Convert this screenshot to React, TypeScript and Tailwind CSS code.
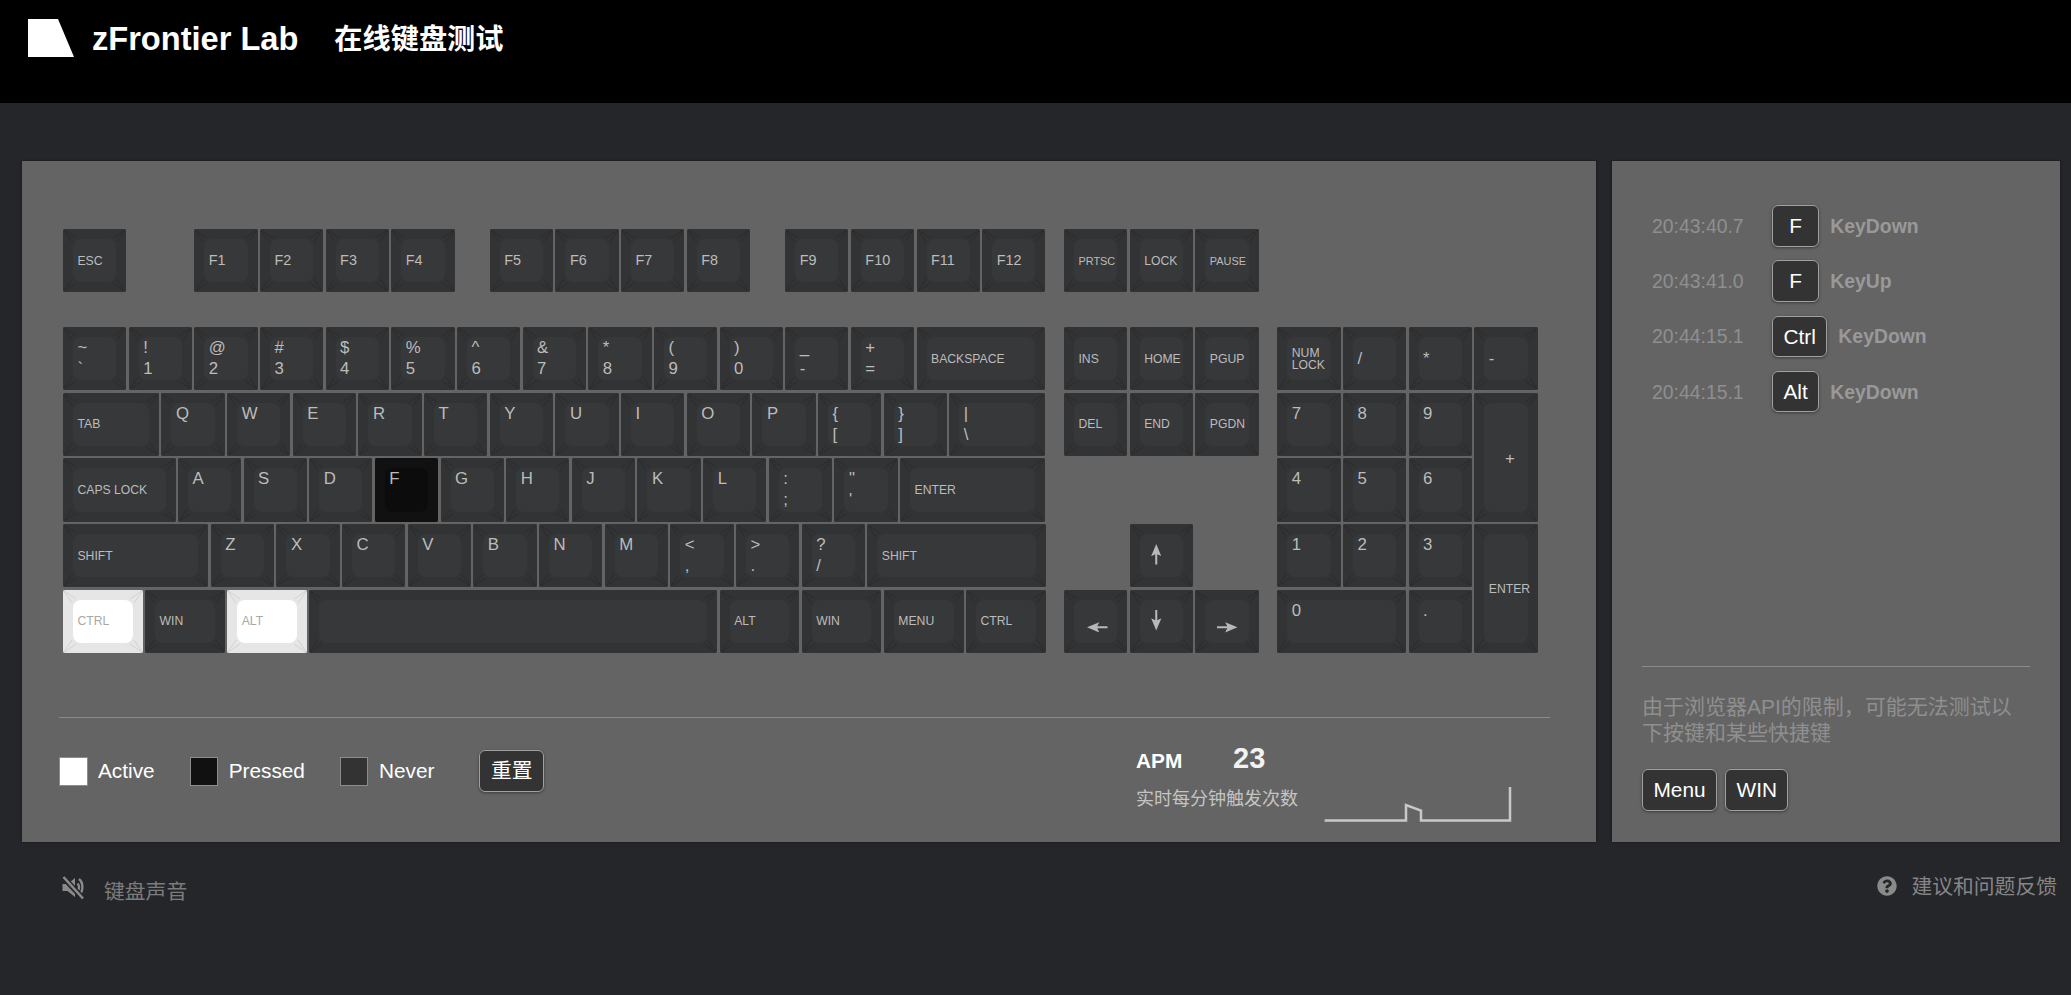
import React from 'react';
import { FaQuestionCircle } from 'react-icons/fa';

type KeyState = 'active' | 'pressed' | undefined;

interface KeyDef {
  top?: string;
  bottom?: string;
  small?: string;
  mid?: string;
  w?: string;
  state?: KeyState;
  tiny?: boolean;
  arrow?: 'up' | 'down' | 'left' | 'right';
}

const U1 = 'w-[65.67px]';
const U125 = 'w-[82.08px]';
const U15 = 'w-[98.5px]';
const U175 = 'w-[114.92px]';
const U2 = 'w-[131.33px]';
const U225 = 'w-[147.76px]';
const U275 = 'w-[180.6px]';
const U625 = 'w-[410.44px]';

const letters = (s: string): KeyDef[] => s.split('').map(c => ({ top: c }));
const pairs = (s: string): KeyDef[] => s.split(' ').map(p => ({ top: p[0], bottom: p[1] }));
const fkeys = (a: number, b: number): KeyDef[] => {
  const out: KeyDef[] = [];
  for (let i = a; i <= b; i++) out.push({ mid: `F${i}` });
  return out;
};

const row1: KeyDef[] = [...pairs('~` !1 @2 #3 $4 %5 ^6 &7 *8 (9 )0 _- +='), { small: 'BACKSPACE', w: U2 }];
const row2: KeyDef[] = [{ small: 'TAB', w: U15 }, ...letters('QWERTYUIOP'), ...pairs('{[ }]'), { top: '|', bottom: '\\', w: U15 }];
const row3: KeyDef[] = [
  { small: 'CAPS LOCK', w: U175 },
  ...letters('ASD'),
  { top: 'F', state: 'pressed' },
  ...letters('GHJKL'),
  ...pairs(':; "\''),
  { small: 'ENTER', w: U225 },
];
const row4: KeyDef[] = [{ small: 'SHIFT', w: U225 }, ...letters('ZXCVBNM'), ...pairs('<, >. ?/'), { small: 'SHIFT', w: U275 }];
const row5: KeyDef[] = [
  { small: 'CTRL', w: U125, state: 'active' },
  { small: 'WIN', w: U125 },
  { small: 'ALT', w: U125, state: 'active' },
  { w: U625 },
  { small: 'ALT', w: U125 },
  { small: 'WIN', w: U125 },
  { small: 'MENU', w: U125 },
  { small: 'CTRL', w: U125 },
];

const log = [
  { time: '20:43:40.7', key: 'F', action: 'KeyDown' },
  { time: '20:43:41.0', key: 'F', action: 'KeyUp' },
  { time: '20:44:15.1', key: 'Ctrl', action: 'KeyDown' },
  { time: '20:44:15.1', key: 'Alt', action: 'KeyDown' },
];

const Corner = ({ className }: { className: string }) => (
  <svg className={`absolute w-[14px] h-[14px] ${className}`} viewBox="0 0 14 14" fill="none" stroke="currentColor" strokeWidth="1">
    <path d="M0.5 0.5L9 13M0.5 0.5L13 9" />
  </svg>
);

const ArrowGlyph = ({ dir }: { dir: 'up' | 'down' | 'left' | 'right' }) => {
  const rot = dir === 'up' ? 'ml-[21px] -mt-[1px]' : dir === 'down' ? 'ml-[21px] -mt-[1px] rotate-180' : dir === 'left' ? 'ml-[28px] rotate-[-90deg]' : 'ml-[27px] rotate-90';
  return (
    <svg className={`w-[10.5px] h-[20.5px] ${rot}`} viewBox="0 0 10 20" fill="#b8b8b8">
      <path d="M5 0L10 12L6 10V20H4V10L0 12Z" />
    </svg>
  );
};

const Key: React.FC<KeyDef & { className?: string }> = ({ top, bottom, small, mid, w = U1, state, tiny, arrow, className }) => {
  const outer = state === 'active' ? 'bg-[#e6e6e6]' : state === 'pressed' ? 'bg-[#111111]' : 'bg-[#323335]';
  const inner = state === 'active' ? 'bg-white' : state === 'pressed' ? 'bg-[#0c0c0c]' : 'bg-[#37383a]';
  const line = state === 'active' ? 'text-[#d2d2d2]' : state === 'pressed' ? 'text-[#111111]' : 'text-[#2b2c2e]';
  const textColor = state === 'active' ? 'text-[#a8a8a8]' : 'text-[#bcbcbc]';

  return (
    <div className={`${className ?? `${w} h-[65.67px]`} p-[1.2px] shrink-0`}>
      <div className={`relative h-full w-full rounded-[2px] overflow-hidden ${outer}`}>
        <div className={`absolute inset-[10px] rounded-[8px] ${inner}`} />
        <Corner className={`left-0 top-0 ${line}`} />
        <Corner className={`right-0 top-0 -scale-x-100 ${line}`} />
        <Corner className={`left-0 bottom-0 -scale-y-100 ${line}`} />
        <Corner className={`right-0 bottom-0 -scale-100 ${line}`} />
        {small && (
          <div className={`relative h-full flex items-center pl-[14.5px] whitespace-pre-line ${tiny ? 'text-[10.9px]' : 'text-[12.2px]'} leading-[12px] ${textColor}`}>
            {small}
          </div>
        )}
        {mid && (
          <div className={`relative h-full flex items-center pl-[14.5px] ${mid.startsWith('F') ? 'text-[14.4px]' : 'text-[16.8px]'} ${textColor}`}>
            {mid}
          </div>
        )}
        {top && (
          <div className={`relative pt-[10px] pl-[14.5px] text-[16.8px] leading-[21px] ${textColor}`}>
            <div>{top}</div>
            {bottom && <div>{bottom}</div>}
          </div>
        )}
        {arrow && (
          <div className={`relative ${arrow === 'up' || arrow === 'down' ? 'pt-[21px]' : 'pt-[27px]'}`}>
            <ArrowGlyph dir={arrow} />
          </div>
        )}
      </div>
    </div>
  );
};

const KeyRow = ({ keys }: { keys: KeyDef[] }) => (
  <div className="flex">
    {keys.map((k, i) => (
      <Key key={i} {...k} />
    ))}
  </div>
);

const Chip = ({ children }: { children: React.ReactNode }) => (
  <span className="inline-flex items-center justify-center whitespace-nowrap h-[41.6px] min-w-[47.3px] px-[10.5px] rounded-[6px] border border-[#a0a0a0] bg-[#333333] text-white text-[20.8px] shadow-[0_1px_3px_rgba(0,0,0,0.4)]">
    {children}
  </span>
);

const MuteIcon = () => (
  <svg className="w-[24px] h-[24px]" viewBox="0 0 24 24" fill="none">
    <path d="M0.5 8H5.5L13 2V21L5.5 15H0.5Z" fill="#8a8a8a" />
    <path d="M15.5 7.5C17.5 9.5 17.5 13 15.5 15M17 3C21.5 6.5 21.5 15.5 17 19" stroke="#8a8a8a" strokeWidth="2.4" />
    <path d="M0.5 0.5L21.5 23" stroke="#25262a" strokeWidth="5.5" />
    <path d="M1.5 1L21 22.5" stroke="#8a8a8a" strokeWidth="2.6" />
  </svg>
);

export default function App() {
  return (
    <div className="min-h-screen bg-[#25262a] font-['Liberation_Sans','Noto_Sans_CJK_SC',sans-serif]">
      <header className="h-[103px] bg-black pl-[28px] pt-[19px]">
        <div className="flex items-center h-[38px] text-white font-bold">
          <svg className="w-[46px] h-[38px]" viewBox="0 0 46 38" fill="#ffffff">
            <polygon points="0,0 30,0 46,38 0,38" />
          </svg>
          <span className="ml-[18px] text-[32.6px] leading-[40px] pt-[1px]">zFrontier Lab</span>
          <span className="ml-[36px] text-[28.2px] leading-[40px] pt-[1px]">在线键盘测试</span>
        </div>
      </header>

      <main className="flex pl-[21.5px] pt-[58px] gap-[16.5px]">
        <section className="w-[1574px] h-[681px] bg-[#646464] shadow-[0_0_2px_rgba(0,0,0,0.5)]">
          <div className="flex pl-[40.3px] pt-[66.8px]">
            <div className="w-[985px] shrink-0">
              <div className="flex">
                <Key small="ESC" />
                <div className="w-[65.67px] shrink-0" />
                {fkeys(1, 4).map(k => <Key key={k.mid} {...k} />)}
                <div className="w-[32.83px] shrink-0" />
                {fkeys(5, 8).map(k => <Key key={k.mid} {...k} />)}
                <div className="w-[32.83px] shrink-0" />
                {fkeys(9, 12).map(k => <Key key={k.mid} {...k} />)}
              </div>
              <div className="mt-[32.5px]">
                <KeyRow keys={row1} />
                <KeyRow keys={row2} />
                <KeyRow keys={row3} />
                <KeyRow keys={row4} />
                <KeyRow keys={row5} />
              </div>
            </div>

            <div className="ml-[16px] w-[197px] shrink-0">
              <KeyRow keys={[{ small: 'PRTSC', tiny: true }, { small: 'LOCK' }, { small: 'PAUSE', tiny: true }]} />
              <div className="mt-[32.5px]">
                <KeyRow keys={[{ small: 'INS' }, { small: 'HOME' }, { small: 'PGUP' }]} />
                <KeyRow keys={[{ small: 'DEL' }, { small: 'END' }, { small: 'PGDN' }]} />
                <div className="h-[65.67px]" />
                <div className="flex pl-[65.67px]">
                  <Key arrow="up" />
                </div>
                <KeyRow keys={[{ arrow: 'left' }, { arrow: 'down' }, { arrow: 'right' }]} />
              </div>
            </div>

            <div className="ml-[16.3px] mt-[98.17px] grid grid-cols-[repeat(4,65.67px)] grid-rows-[repeat(5,65.67px)] shrink-0">
              <Key className="h-full w-full" small={'NUM\nLOCK'} />
              <Key className="h-full w-full" mid="/" />
              <Key className="h-full w-full" mid="*" />
              <Key className="h-full w-full" mid="-" />
              <Key className="h-full w-full" top="7" />
              <Key className="h-full w-full" top="8" />
              <Key className="h-full w-full" top="9" />
              <div className="row-span-2 relative">
                <Key className="h-full w-full" />
                <span className="absolute left-[32px] top-[54px] text-[16.8px] text-[#bcbcbc]">+</span>
              </div>
              <Key className="h-full w-full" top="4" />
              <Key className="h-full w-full" top="5" />
              <Key className="h-full w-full" top="6" />
              <Key className="h-full w-full" top="1" />
              <Key className="h-full w-full" top="2" />
              <Key className="h-full w-full" top="3" />
              <div className="row-span-2">
                <Key className="h-full w-full" small="ENTER" />
              </div>
              <div className="col-span-2">
                <Key className="h-full w-full" top="0" />
              </div>
              <Key className="h-full w-full" top="." />
            </div>
          </div>

          <div className="ml-[37.5px] mt-[63px] w-[1491px] border-t border-[#8a8a8a]" />

          <div className="ml-[37.5px] w-[1491px] flex items-start">
            <div className="mt-[32px] shrink-0 flex items-center h-[41.6px] text-white text-[20.8px]">
              <span className="w-[28.5px] h-[29px] bg-white border border-[#8c8c8c]" />
              <span className="ml-[10.5px]">Active</span>
              <span className="ml-[35px] w-[28.5px] h-[29px] bg-[#111111] border border-[#8c8c8c]" />
              <span className="ml-[10.5px]">Pressed</span>
              <span className="ml-[35px] w-[28.5px] h-[29px] bg-[#333333] border border-[#8c8c8c]" />
              <span className="ml-[10.5px]">Never</span>
              <span className="ml-[45px]">
                <Chip>重置</Chip>
              </span>
            </div>

            <div className="ml-auto mr-[38px] mt-[26px] shrink-0">
              <div className="flex items-baseline text-white font-bold">
                <span className="w-[97px] text-[20.8px] leading-[29px]">APM</span>
                <span className="text-[29px] leading-[29px] text-[#f2f2f2]">23</span>
              </div>
              <div className="flex items-start mt-[9px]">
                <span className="mt-[3px] w-[186px] text-[18px] leading-[24px] text-[#c4c4c4]">实时每分钟触发次数</span>
                <svg className="w-[190px] h-[40px]" viewBox="0 0 190 40" fill="none" stroke="#c8c8c8" strokeWidth="2.5">
                  <polyline points="2.6,36.5 84,36.5 84,21 99,26.7 99,36.5 188,36.5 188,3" />
                </svg>
              </div>
            </div>
          </div>
        </section>

        <aside className="w-[448px] h-[681px] bg-[#646464] shadow-[0_0_2px_rgba(0,0,0,0.5)] flex flex-col justify-between">
          <div className="pl-[40px] pt-[44px] flex flex-col gap-[13.7px]">
            {log.map((item, i) => (
              <div key={i} className="flex items-center">
                <span className="w-[120px] pt-[1px] text-[19.4px] text-[#8f8f8f]">{item.time}</span>
                <Chip>{item.key}</Chip>
                <span className="ml-[11px] pt-[1px] text-[19.4px] font-bold text-[#999999]">{item.action}</span>
              </div>
            ))}
          </div>
          <div className="ml-[30px] w-[388px] pb-[31.3px]">
            <div className="border-t border-[#8a8a8a]" />
            <p className="mt-[27px] w-[378px] text-[21px] leading-[26.7px] text-[#8f8f8f]">
              由于浏览器API的限制，可能无法测试以下按键和某些快捷键
            </p>
            <div className="mt-[22px] flex gap-[8px]">
              <Chip>Menu</Chip>
              <Chip>WIN</Chip>
            </div>
          </div>
        </aside>
      </main>

      <footer className="flex justify-between pt-[34px] pl-[62px] pr-[14px]">
        <div className="flex items-start">
          <MuteIcon />
          <span className="ml-[18px] mt-[4px] text-[20.8px] leading-[24px] text-[#7c7c7c]">键盘声音</span>
        </div>
        <div className="flex items-start">
          <FaQuestionCircle className="w-[20px] h-[20px] text-[#8a8a8a]" />
          <span className="ml-[14px] -mt-[1px] text-[20.8px] leading-[24px] text-[#858585]">建议和问题反馈</span>
        </div>
      </footer>
    </div>
  );
}
